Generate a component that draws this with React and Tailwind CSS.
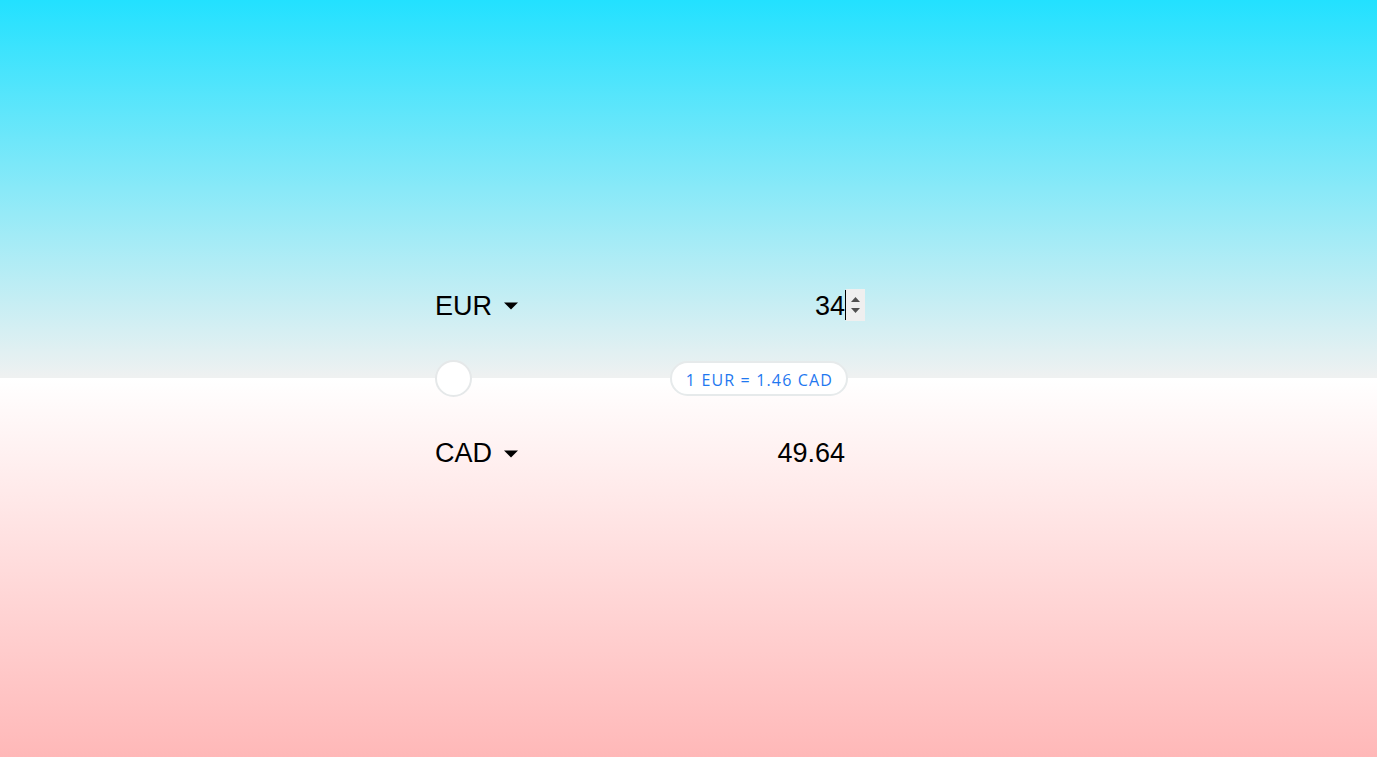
import React from "react";

function Caret() {
  return (
    <svg width="14" height="8" viewBox="0 0 14 8" className="ml-[12px]">
      <path d="M0 0.5 L14 0.5 L7 7.5 Z" fill="#000" />
    </svg>
  );
}

export default function App() {
  return (
    <div className="h-[757px] w-full flex items-center bg-[linear-gradient(to_bottom,#22e1ff_0%,#eff1f1_49.9%,#ffffff_50%,#ffb8b8_100%)] font-['Liberation_Sans',Arial,sans-serif]">
      <div className="ml-[435px] w-[430px] flex flex-col">
        <div className="h-[74px] flex items-center justify-between">
          <div className="flex items-center text-[27px] text-black leading-none pt-[3px]">
            EUR
            <Caret />
          </div>
          <div className="flex items-center">
            <span className="text-[27px] leading-none text-black pt-[3px]">34</span>
            <span className="w-px h-[30px] bg-black" />
            <div className="w-[19px] h-[32px] bg-[#efefef] flex flex-col items-center justify-center gap-[6px]">
              <svg width="9" height="5" viewBox="0 0 9 5"><path d="M0 5 L4.5 0 L9 5 Z" fill="#505050" /></svg>
              <svg width="9" height="5" viewBox="0 0 9 5"><path d="M0 0 L9 0 L4.5 5 Z" fill="#505050" /></svg>
            </div>
          </div>
        </div>
        <div className="h-[74px] flex items-center justify-between">
          <div className="w-[37px] h-[37px] rounded-full bg-white border-2 border-[#e5e8e9]" />
          <div className="mr-[17px] h-[35px] pl-[14px] pr-[13px] pt-[3px] flex items-center rounded-full bg-white border-2 border-[#e6eaeb] text-[16px] tracking-[1.15px] text-[#1f78f0] font-['Open_Sans',sans-serif]">
            1 EUR = 1.46 CAD
          </div>
        </div>
        <div className="h-[74px] flex items-center justify-between">
          <div className="flex items-center text-[27px] text-black leading-none pt-[2px]">
            CAD
            <Caret />
          </div>
          <span className="mr-[20px] text-[27px] leading-none text-black pt-[2px]">49.64</span>
        </div>
      </div>
    </div>
  );
}
